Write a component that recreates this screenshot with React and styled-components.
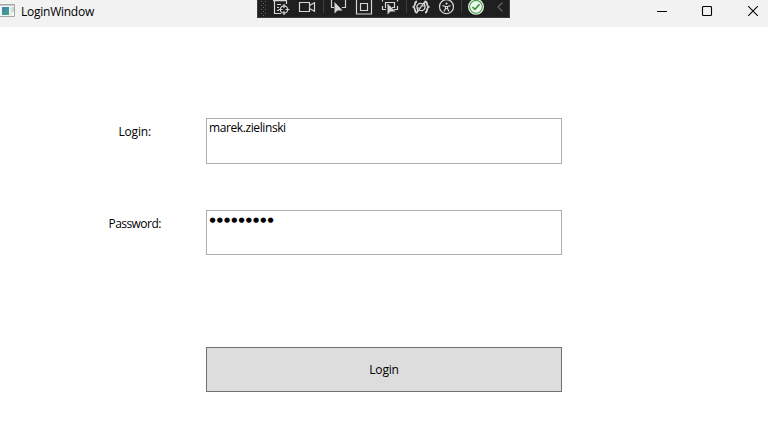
import React from "react";
import styled, { createGlobalStyle } from "styled-components";

const GlobalStyle = createGlobalStyle`
  * { box-sizing: border-box; }
  body { margin: 0; background: #fff; overflow: hidden; }
`;

const Window = styled.div`
  width: 768px;
  height: 421px;
  background: #fff;
  color: #000;
  font: 12px/16px "Open Sans", "Noto Sans", sans-serif;
  overflow: hidden;
`;

const TitleBar = styled.header`
  display: grid;
  grid-template-columns: 257px 253px 1fr;
  height: 27px;
  background: #f2f2f2;
`;

const Caption = styled.div`
  display: flex;
  align-items: flex-start;
  gap: 5px;
  padding-top: 4px;
`;

const Title = styled.span`
  letter-spacing: -0.25px;
`;

const DebugBar = styled.div`
  height: 18px;
  background: #1f1f1f;
  border: solid #3d3d3d;
  border-width: 0 1px 1px;
  svg { display: block; margin-left: -1px; }
`;

const WindowControls = styled.div`
  display: flex;
  justify-content: flex-end;
`;

const ControlButton = styled.button`
  display: flex;
  justify-content: center;
  width: 45px;
  height: 23px;
  padding: 6px 0 0;
  border: 0;
  background: transparent;
  &:last-child { width: 39px; padding-left: 9px; }
`;

const Form = styled.form`
  display: grid;
  grid-template-columns: 206px 356px;
  grid-template-rows: 46px 45px;
  padding-top: 91px;
  row-gap: 46px;
`;

const Label = styled.label`
  padding-top: 6px;
  padding-left: ${(p) => p.$indent}px;
  letter-spacing: ${(p) => p.$spacing}px;
`;

const Field = styled.div`
  border: 1px solid #abadb3;
  padding: 1px 2px;
  letter-spacing: ${(p) => p.$spacing || 0}px;
`;

const Dots = styled.span`
  display: block;
  padding-left: 0.5px;
  font: 7px/17px "DejaVu Sans", sans-serif;
  letter-spacing: 1.15px;
`;

const SubmitButton = styled.button`
  grid-column: 2;
  height: 45px;
  margin-top: 46px;
  border: 1px solid #707070;
  background: #ddd;
  color: #000;
  font: inherit;
  letter-spacing: -0.2px;
  padding: 0;
`;

const AppIcon = () => (
  <svg width="16" height="15" viewBox="0 0 16 15">
    <defs>
      <linearGradient id="screen" x1="0" y1="0" x2="1" y2="1">
        <stop offset="0" stopColor="#3d7fb5" />
        <stop offset="1" stopColor="#4aa77c" />
      </linearGradient>
    </defs>
    <path d="M0 .5H14.5V12.5H0" fill="#f7f8f9" stroke="#a4a8ab" />
    <path d="M0 1.5H14" stroke="#c8cbce" />
    <rect x="2" y="3" width="7" height="8" fill="url(#screen)" />
    <rect x="10" y="3" width="2" height="8" fill="#e0e8ec" />
    <rect x="12" y="3" width="2" height="5" fill="#b9ddd0" />
  </svg>
);

const grip = [];
for (let y = 1; y < 16; y += 2) {
  for (let x = y % 4 === 1 ? 4 : 6; x < 10; x += 4) grip.push([x, y]);
}

const DebugTools = () => (
  <svg width="253" height="17" viewBox="0 0 253 17" fill="none" stroke="#d6d6d6" strokeWidth="1.2">
    {grip.map(([x, y]) => (
      <rect key={`${x}-${y}`} x={x} y={y} width="1" height="1" fill="#686868" stroke="none" />
    ))}
    {/* live visual tree */}
    <path d="M16 .6H29.5V4M17.5 0V13.5H24M20 4.5H24M20 7.5H22M20 10.5H22" />
    <circle cx="27" cy="9.5" r="3.7" />
    <path d="M27 4V8M27 11V15M21.5 9.5H25.5M28.5 9.5H32.5" />
    {/* camera */}
    <path d="M42.5 2.5H52.5V11.5H42.5ZM52.5 5.5L57.5 2.7V11.3L52.5 8.5" />
    <path d="M66.5 0V13M149.5 0V13M204.5 0V13" stroke="#3d3d3d" strokeWidth="1" />
    {/* element selection */}
    <path d="M74.5 0V7.5H77M85 7.5H88.5V0" />
    <path d="M77.5 2V13.6L80.5 10.5H85.6Z" fill="#d6d6d6" stroke="none" />
    {/* layout adorners */}
    <path d="M99.5 -.5H114.5V14H99.5ZM103.5 3.5H110.5V10.5H103.5Z" />
    {/* track focused element */}
    <path d="M125.5 0V1.5M140.5 0V1.5M125.5 6V9.5H129M137 9.5H140.5V6M129 7.5H128.5V2.5H137.5V7.5H135" />
    <path d="M130.5 3.5V14.5L133.5 11.5H138.5Z" fill="#d6d6d6" stroke="none" />
    {/* hot reload */}
    <path d="M160 1.5C157 1.5 159 5.5 156.5 7C159 8.5 157 12.5 160 12.5M168 1.5C171 1.5 169 5.5 171.5 7C169 8.5 171 12.5 168 12.5" strokeWidth="1.8" />
    <path d="M160.5 9.5C158.5 5 162 2 166 4L167.5 2V6H163.5M167.5 4.5C169.5 9 166 12 162 10L160.5 12V8H164M161 11L167 3" />
    {/* accessibility */}
    <circle cx="189.5" cy="6.7" r="7" />
    <circle cx="189.5" cy="3.6" r="1.1" fill="#d6d6d6" stroke="none" />
    <path d="M185.5 5.7L188.5 6.5H190.5L193.5 5.7M188.5 6.5V8.5L187 11.5M190.5 6.5V8.5L192 11.5M188.5 8.5H190.5" />
    {/* status */}
    <circle cx="219" cy="6.8" r="8" fill="#f2f7f1" stroke="none" />
    <circle cx="219" cy="6.8" r="6.4" stroke="#43a047" strokeWidth="1.1" />
    <path d="M215.4 7L218 9.4L222.6 4.2" stroke="#2f9937" strokeWidth="1.7" />
    <path d="M245.5 2.5L241 7L245.5 11.5" stroke="#666" />
  </svg>
);

export default function App() {
  return (
    <>
      <GlobalStyle />
      <Window>
        <TitleBar>
          <Caption>
            <AppIcon />
            <Title>LoginWindow</Title>
          </Caption>
          <DebugBar><DebugTools /></DebugBar>
          <WindowControls>
            <ControlButton type="button" aria-label="Minimize">
              <svg width="12" height="12"><path d="M1 5.5H11" stroke="#000" /></svg>
            </ControlButton>
            <ControlButton type="button" aria-label="Maximize">
              <svg width="12" height="12"><rect x="1.5" y=".5" width="9" height="9" rx="1" fill="none" stroke="#000" strokeWidth="1.1" /></svg>
            </ControlButton>
            <ControlButton type="button" aria-label="Close">
              <svg width="12" height="12"><path d="M1.2.2L10.8 9.8M10.8.2L1.2 9.8" stroke="#000" strokeWidth="1.1" /></svg>
            </ControlButton>
          </WindowControls>
        </TitleBar>
        <Form>
          <Label $indent={118.5} $spacing={-0.2}>Login:</Label>
          <Field $spacing={-0.4}>marek.zielinski</Field>
          <Label $indent={108.5} $spacing={-0.55}>Password:</Label>
          <Field><Dots>●●●●●●●●●</Dots></Field>
          <SubmitButton type="button">Login</SubmitButton>
        </Form>
      </Window>
    </>
  );
}
